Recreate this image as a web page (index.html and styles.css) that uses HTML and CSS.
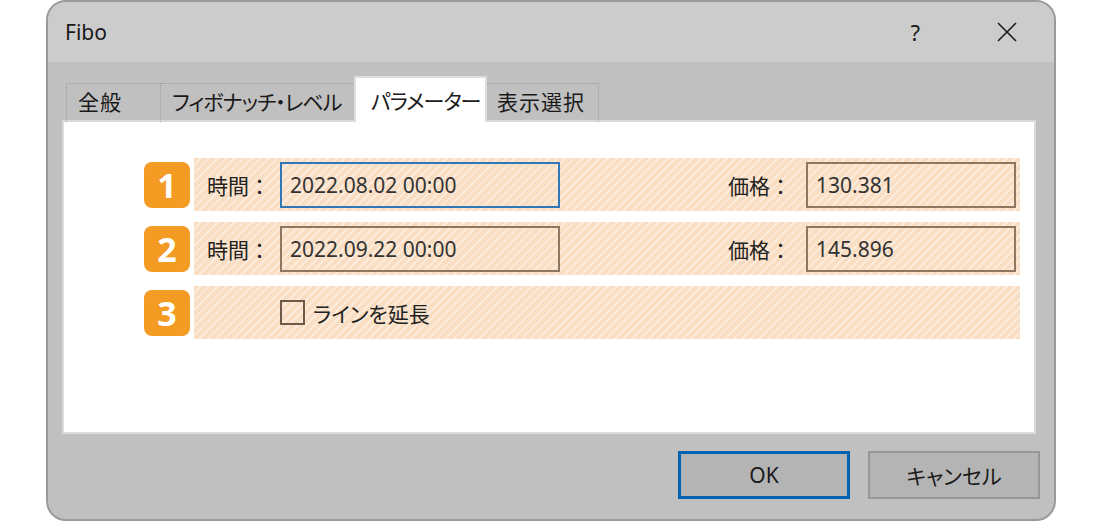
FILE: index.html
```html
<!DOCTYPE html>
<html lang="ja">
<head>
    <meta charset="UTF-8">
    <title>Fibo</title>
    <link rel="stylesheet" href="styles.css">
</head>
<body>
    <div class="window">
        <div class="titlebar">
            <span class="title">Fibo</span>
            <span class="help">?</span>
            <svg class="close" width="22" height="22" viewBox="0 0 22 22">
                <path d="M2 2 L20 20 M20 2 L2 20" stroke="#1a1a1a" stroke-width="1.6" fill="none"/>
            </svg>
        </div>
        <div class="body">
            <div class="tabs">
                <div class="tab tab-general">全般</div>
                <div class="tab tab-levels">フィボナッチ・レベル</div>
                <div class="tab tab-params active">パラメーター</div>
                <div class="tab tab-view">表示選択</div>
            </div>
            <div class="panel">
                <div class="row">
                    <div class="badge">1</div>
                    <div class="band">
                        <span class="label">時間：</span>
                        <div class="field time focus">2022.08.02 00:00</div>
                        <span class="label price-label">価格：</span>
                        <div class="field price">130.381</div>
                    </div>
                </div>
                <div class="row">
                    <div class="badge">2</div>
                    <div class="band">
                        <span class="label">時間：</span>
                        <div class="field time">2022.09.22 00:00</div>
                        <span class="label price-label">価格：</span>
                        <div class="field price">145.896</div>
                    </div>
                </div>
                <div class="row">
                    <div class="badge">3</div>
                    <div class="band">
                        <span class="label"></span>
                        <label class="check">
                            <span class="box"></span>
                            <span>ラインを延長</span>
                        </label>
                    </div>
                </div>
            </div>
            <div class="buttons">
                <button class="btn default">OK</button>
                <button class="btn">キャンセル</button>
            </div>
        </div>
    </div>
</body>
</html>
```

FILE: styles.css
```css
body {
    margin: 0;
    background: #fff;
    font-family: "Noto Sans", "Noto Sans CJK JP", sans-serif;
    font-feature-settings: "palt";
    color: #1a1a1a;
}

.window {
    box-sizing: border-box;
    width: 1010px;
    height: 521px;
    margin-left: 46px;
    border: 2px solid #9a9a9a;
    border-radius: 20px;
    overflow: hidden;
    background: #c0c0c0;
    display: flex;
    flex-direction: column;
}

.titlebar {
    height: 60px;
    background: #cccccc;
    display: flex;
    align-items: center;
    padding: 0 36px 0 17px;
    font-size: 21px;
}

.title {
    flex: 1;
}

.help {
    margin-right: 76px;
    font-size: 22px;
}

.body {
    flex: 1;
    padding: 16px 14px 0 14px;
}

.tabs {
    display: flex;
    align-items: flex-end;
    height: 44px;
    padding-left: 4px;
    margin-bottom: -2px;
    font-size: 21px;
    letter-spacing: -1px;
}

.tab {
    box-sizing: border-box;
    height: 39px;
    line-height: 37px;
    padding: 0 11px;
    border: 1px dotted #9c9c9c;
    border-bottom: none;
    white-space: nowrap;
}

.tab + .tab {
    border-left: none;
}

.tab-general { width: 95px; letter-spacing: 1px; }
.tab-levels { width: 194px; }
.tab-view { width: 112px; padding-left: 10px; letter-spacing: 1px; }

.tab.active {
    position: relative;
    z-index: 1;
    width: 133px;
    height: 46px;
    line-height: 46px;
    padding: 0 0 0 15px;
    margin-left: -1px;
    background: #fff;
    border: 2px solid #dedede;
    border-bottom: none;
}

.tab.active + .tab {
    border-left: none;
}

.panel {
    box-sizing: border-box;
    height: 314px;
    margin-right: 4px;
    background: #fff;
    border: 2px solid #dadada;
    padding: 36px 14px 0 80px;
    display: flex;
    flex-direction: column;
    gap: 11px;
}

.row {
    display: flex;
    align-items: center;
    gap: 4px;
    height: 53px;
}

.badge {
    width: 46px;
    height: 46px;
    border-radius: 8px;
    background: #f39b22;
    color: #fff;
    font-size: 34px;
    font-weight: bold;
    display: flex;
    align-items: center;
    justify-content: center;
}

.band {
    flex: 1;
    align-self: stretch;
    display: flex;
    align-items: center;
    padding: 0 4px 0 13px;
    background: repeating-linear-gradient(135deg, #f9dec3 0 4px, #fcebdb 4px 6px);
    font-size: 21px;
}

.label {
    width: 73px;
    color: #222;
    font-feature-settings: normal;
}

.price-label {
    width: 78px;
    margin-left: auto;
}

.field {
    box-sizing: border-box;
    height: 46px;
    line-height: 42px;
    padding-left: 8px;
    border: 2px solid #8c7763;
    color: #333;
}

.field.time {
    width: 280px;
}

.field.price {
    width: 210px;
}

.field.focus {
    border-color: #3079b8;
}

.check {
    display: flex;
    align-items: center;
    gap: 8px;
    color: #222;
}

.box {
    box-sizing: border-box;
    width: 25px;
    height: 25px;
    border: 2px solid #6e5a48;
}

.buttons {
    display: flex;
    justify-content: flex-end;
    gap: 18px;
    padding-top: 17px;
}

.btn {
    box-sizing: border-box;
    width: 172px;
    height: 48px;
    background: #b4b4b4;
    border: 2px solid #979797;
    font-family: inherit;
    font-feature-settings: "palt";
    font-size: 21px;
    color: #1a1a1a;
}

.btn.default {
    border: 3px solid #0063b1;
}
```
